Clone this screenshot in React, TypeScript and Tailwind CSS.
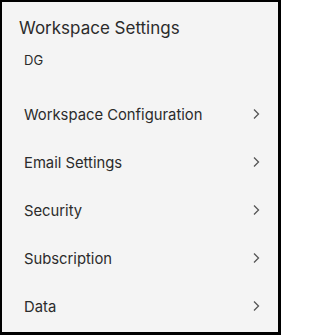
import React from 'react';

const items = ['Workspace Configuration', 'Email Settings', 'Security', 'Subscription', 'Data'];

function Chevron() {
  return (
    <svg width="10" height="12" viewBox="0 0 10 12" fill="none" className="text-[#555]">
      <path d="M3 1.5 L7.5 6 L3 10.5" stroke="currentColor" strokeWidth="1.3" />
    </svg>
  );
}

export default function App() {
  return (
    <div
      className="w-[281px] h-[335px] bg-black pl-[2px] pt-[2px] pr-[3px] pb-[3px]"
      style={{ fontFamily: 'Inter, "Noto Sans", sans-serif' }}
    >
      <div className="h-full bg-[#f4f4f4] text-[#2b2b2b] flex flex-col">
        <h1 className="pl-[17px] pt-[15px] text-[17px] leading-[22px] font-normal">Workspace Settings</h1>
        <div className="pl-[22px] pt-[13px] text-[13px] leading-[16px]">DG</div>
        <ul className="mt-[38px] flex flex-col">
          {items.map((t) => (
            <li key={t} className="h-[48px] pl-[22px] pr-[17px] flex items-start justify-between">
              <span className="text-[14.8px] leading-[18px]">{t}</span>
              <span className="pt-[2px]"><Chevron /></span>
            </li>
          ))}
        </ul>
      </div>
    </div>
  );
}
